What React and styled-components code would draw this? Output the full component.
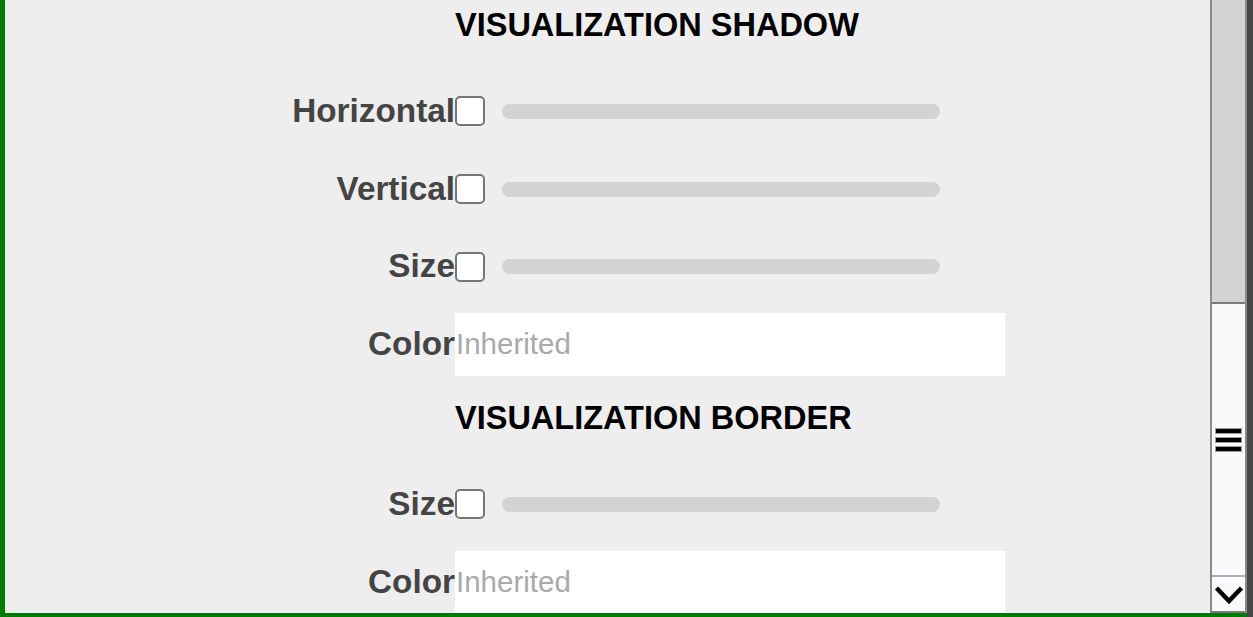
import React from "react";
import styled, { createGlobalStyle } from "styled-components";

const GlobalStyle = createGlobalStyle`
  html, body {
    margin: 0;
    padding: 0;
    height: 100%;
    overflow: hidden;
    font-family: "Liberation Sans", Arial, sans-serif;
  }
  #root { height: 100%; }
`;

const Page = styled.div`
  display: flex;
  width: 100%;
  height: 100vh;
`;

const Frame = styled.div`
  flex: 1;
  display: flex;
  min-width: 0;
  border-left: 5px solid #007d00;
  border-bottom: 4px solid #007d00;
  overflow: hidden;
`;

const Content = styled.div`
  flex: 1;
  background: #eeeeee;
  overflow: hidden;
  display: flex;
  flex-direction: column;
`;

const Section = styled.section`
  display: grid;
  grid-template-columns: 450px 550px;
  row-gap: 14.67px;
  margin-top: ${(p) => p.$offset || 0}px;
`;

const Heading = styled.h2`
  grid-column: 2;
  margin: 0 0 15.33px;
  height: 50px;
  line-height: 51px;
  font-size: 32.5px;
  font-weight: bold;
  color: #000;
  white-space: nowrap;
`;

const Label = styled.label`
  grid-column: 1;
  height: 63px;
  line-height: 62px;
  text-align: right;
  font-size: 33.3px;
  font-weight: bold;
  color: #444444;
  white-space: nowrap;
`;

const Control = styled.div`
  grid-column: 2;
  height: 63px;
  display: flex;
  align-items: center;
  gap: 17px;
`;

const Check = styled.input.attrs({ type: "checkbox" })`
  appearance: none;
  margin: 0;
  width: 30px;
  height: 30px;
  box-sizing: border-box;
  border: 2px solid #767676;
  border-radius: 5px;
  background: #ffffff;
`;

const Track = styled.div`
  width: 438px;
  height: 15px;
  border-radius: 8px;
  background: #d3d3d3;
`;

const ColorInput = styled.input.attrs({ type: "text" })`
  width: 550px;
  height: 63px;
  box-sizing: border-box;
  border: none;
  outline: none;
  margin: 0;
  padding: 0 0 0 1px;
  background: #ffffff;
  font-family: "Liberation Sans", Arial, sans-serif;
  font-size: 29.5px;
  color: #222;
  &::placeholder { color: #a9a9a9; }
`;

const Scrollbar = styled.div`
  width: 33px;
  flex: none;
  border-left: 2px solid #8a8a8a;
  border-right: 2px solid #8a8a8a;
  display: flex;
  flex-direction: column;
`;

const ScrollTrack = styled.div`
  height: 302px;
  flex: none;
  background: #d4d3d1;
`;

const Thumb = styled.div`
  flex: 1;
  border-top: 2px solid #7b7b7b;
  background: #fafafa;
  display: flex;
  flex-direction: column;
  align-items: center;
  justify-content: center;
  gap: 5px;
`;

const GripBar = styled.span`
  display: block;
  width: 25px;
  height: 4px;
  background: #000;
  box-shadow: 0 0 0 1px #9a9a9a;
`;

const ArrowButton = styled.div`
  flex: none;
  border-top: 2px solid #a6aeb9;
  border-bottom: 2px solid #7b7b7b;
  background: #fafafa;
  display: flex;
  align-items: center;
  justify-content: center;
  padding-top: 2px;
  box-sizing: content-box;
  height: 32px;
`;

const DarkStrip = styled.div`
  width: 6px;
  flex: none;
  background: #474747;
`;

function SliderRow({ label }) {
  return (
    <>
      <Label>{label}</Label>
      <Control>
        <Check />
        <Track />
      </Control>
    </>
  );
}

function ColorRow() {
  return (
    <>
      <Label>Color</Label>
      <Control>
        <ColorInput placeholder="Inherited" />
      </Control>
    </>
  );
}

export default function App() {
  return (
    <>
      <GlobalStyle />
      <Page>
        <Frame>
          <Content>
            <Section>
              <Heading>VISUALIZATION SHADOW</Heading>
              <SliderRow label="Horizontal" />
              <SliderRow label="Vertical" />
              <SliderRow label="Size" />
              <ColorRow />
            </Section>
            <Section $offset={17}>
              <Heading>VISUALIZATION BORDER</Heading>
              <SliderRow label="Size" />
              <ColorRow />
            </Section>
          </Content>
          <Scrollbar>
            <ScrollTrack />
            <Thumb>
              <GripBar />
              <GripBar />
              <GripBar />
            </Thumb>
            <ArrowButton>
              <svg width="30" height="20" viewBox="0 0 30 20">
                <path d="M2.5 3 L15 16 L27.5 3" fill="none" stroke="#000" strokeWidth="4.5" />
              </svg>
            </ArrowButton>
          </Scrollbar>
        </Frame>
        <DarkStrip />
      </Page>
    </>
  );
}
